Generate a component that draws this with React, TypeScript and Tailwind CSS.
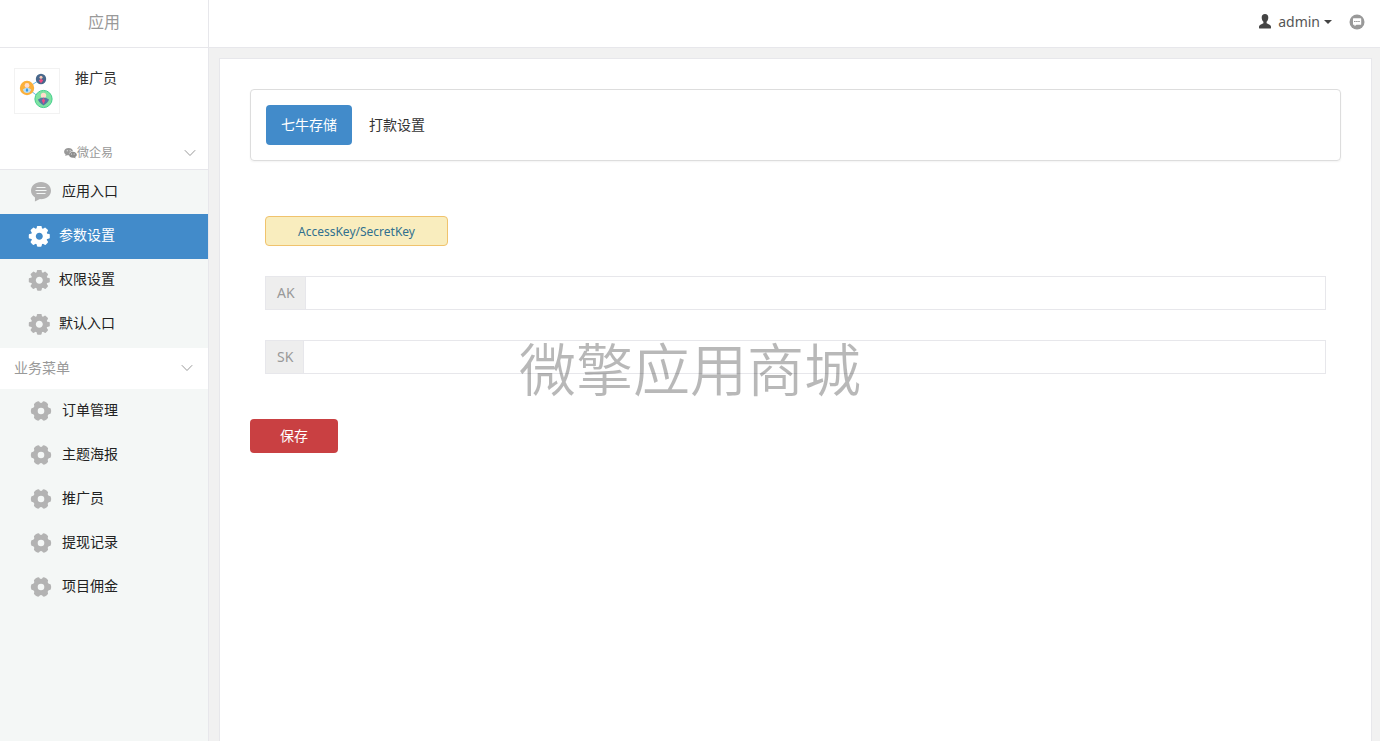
import React from "react";

type IconProps = { className?: string };

function CogIcon({ className = "" }: IconProps) {
  return (
    <svg viewBox="-11.3 -10.3 22 22" className={`size-[22px] shrink-0 ${className}`} aria-hidden="true">
      <circle r="5.9" fill="none" stroke="currentColor" strokeWidth="4.8" />
      {[0, 45, 90, 135, 180, 225, 270, 315].map((angle) => (
        <path
          key={angle}
          d="M-2.9 -7 L-2.3 -9.8 Q-2.1 -10.5 -1.4 -10.5 H1.4 Q2.1 -10.5 2.3 -9.8 L2.9 -7 Z"
          fill="currentColor"
          transform={`rotate(${angle})`}
        />
      ))}
    </svg>
  );
}

function FlowerIcon({ className = "" }: IconProps) {
  return (
    <svg viewBox="-11 -11 22 22" className={`size-[22px] shrink-0 ${className}`} aria-hidden="true">
      <circle r="5.8" fill="none" stroke="currentColor" strokeWidth="5" />
      {[0, 60, 120, 180, 240, 300].map((angle) => (
        <rect
          key={angle}
          x="4.5"
          y="-3.3"
          width="5.6"
          height="6.6"
          rx="2.4"
          fill="currentColor"
          transform={`rotate(${angle})`}
        />
      ))}
    </svg>
  );
}

function ChatIcon({ className = "" }: IconProps) {
  return (
    <svg viewBox="0 0 22 22" className={`size-[22px] shrink-0 ${className}`} aria-hidden="true">
      <path
        d="M11 1C5.300 1 1 4.700 1 9.700c0 2.800 1.500 5.100 4 6.700L4.900 20.400l5-2.300C16.300 18.500 21 14.800 21 9.700 21 4.700 16.700 1 11 1z"
        fill="currentColor"
      />
      <path d="M6.500 6.500h9M5.500 9.500h11M6.500 12.500h9" stroke="#f4f7f6" strokeWidth="1.200" />
    </svg>
  );
}

function ChevronIcon() {
  return (
    <svg viewBox="0 0 12 8" className="h-2 w-3 shrink-0" fill="none" stroke="#999" aria-hidden="true">
      <path d="M.8 1.200 6 6.500l5.200-5.300" />
    </svg>
  );
}

function WechatIcon() {
  return (
    <svg viewBox="0 0 14 12" className="h-3 w-[13px] shrink-0" aria-hidden="true">
      <path d="M5 .6C2.200.6.1 2.300.1 4.600c0 1.200.6 2.300 1.700 3l-.5 1.700 2-1c.7.2 1.300.2 2 .2C5.300 5.600 7 4 9.700 4 9.200 1.900 7.400.6 5 .6z" fill="#999" />
      <path d="M9.600 4.600c-2.400 0-4.200 1.500-4.200 3.300s1.800 3.300 4.200 3.300c.5 0 .9-.1 1.300-.2l1.600.8-.4-1.400c1-.6 1.700-1.500 1.700-2.500 0-1.800-1.800-3.300-4.200-3.300z" fill="#8d8d8d" />
      <g fill="#fff">
        <circle cx="3.500" cy="3.600" r=".6" />
        <circle cx="6.600" cy="3.600" r=".6" />
        <circle cx="8.200" cy="7" r=".55" />
        <circle cx="10.900" cy="7" r=".55" />
      </g>
    </svg>
  );
}

function AppLogo() {
  return (
    <svg viewBox="0 0 44 44" className="size-11" aria-hidden="true">
      <path d="M12 19 26 10M12 19l16 12" stroke="#68b9e8" strokeWidth="1" />
      <circle cx="26" cy="10" r="5.200" fill="#48688c" />
      <circle cx="26" cy="8.300" r="1.500" fill="#f8c9b8" />
      <path d="M23.800 11.500q2.200-3 4.400 0L26 14.200z" fill="#f04b83" />
      <circle cx="12" cy="19" r="7.200" fill="#fbb03b" />
      <circle cx="12" cy="16.500" r="2.400" fill="#ffdccb" />
      <path d="M7.800 20.500q4.200-3.500 8.400 0-1 3.500-4.200 3.500t-4.200-3.500z" fill="#b9def5" />
      <path d="m12 18.800 1.300 2.400-1.300 2-1.300-2z" fill="#3397ea" />
      <circle cx="28.500" cy="30" r="8.600" fill="#7fe3a2" stroke="#45cf8d" strokeWidth="1" />
      <circle cx="28.500" cy="26.500" r="2.700" fill="#ffdccb" />
      <path d="M23 30.500q5.500-4 11 0-.8 3-5.500 6-4.700-3-5.500-6z" fill="#5577a2" />
      <path d="m28.500 29 1.700 2.500-1.700 3.500-1.700-3.500z" fill="#f04b83" />
    </svg>
  );
}

function UserIcon() {
  return (
    <svg viewBox="0 0 14 15" className="h-[15px] w-3.5 shrink-0" fill="#444" aria-hidden="true">
      <path d="M7 0C4.800 0 3.700 1.500 3.700 3.500c0 1.900.7 3.300 1.700 4.300v1.500L2.400 10.800C1.400 11.300 1 12 1 13v.7c0 .6.300.9.900.9h10.200c.6 0 .9-.3.900-.9V13c0-1-.4-1.700-1.400-2.200L8.600 9.300V7.800c1-1 1.700-2.400 1.700-4.300C10.300 1.500 9.200 0 7 0z" />
    </svg>
  );
}

function MessageIcon() {
  return (
    <svg viewBox="0 0 16 16" className="size-4" aria-hidden="true">
      <circle cx="8" cy="8" r="7.500" fill="#999" />
      <path d="M4.500 4.300h7.200q.5 0 .5.500v5.400q0 .5-.5.500H7.500L5.500 12.300v-1.600h-1q-.5 0-.5-.5V4.800q0-.5.500-.5z" fill="#fff" />
      <path d="M5 7.500h6" stroke="#999" strokeDasharray="1.600 .5" />
    </svg>
  );
}

type Item = { label: string; icon: React.ReactNode; compact?: boolean; active?: boolean };

const systemItems: Item[] = [
  { label: "应用入口", icon: <ChatIcon /> },
  { label: "参数设置", icon: <CogIcon />, compact: true, active: true },
  { label: "权限设置", icon: <CogIcon />, compact: true },
  { label: "默认入口", icon: <CogIcon />, compact: true },
];

const businessItems: Item[] = ["订单管理", "主题海报", "推广员", "提现记录", "项目佣金"].map((label) => ({
  label,
  icon: <FlowerIcon />,
}));

function Menu({ items }: { items: Item[] }) {
  return (
    <ul>
      {items.map(({ label, icon, compact, active }) => (
        <li key={label}>
          <a
            href="#"
            aria-current={active ? "page" : undefined}
            className={`flex items-center ${active ? "h-[45px] bg-[#428bca] text-white" : "h-11 text-[#222]"} ${
              compact ? "gap-[9px] pl-7" : "gap-2.5 pl-[30px]"
            }`}
          >
            <span className={active ? "text-white" : "text-[#b3b3b3]"}>{icon}</span>
            <span className={compact ? "pb-1" : "pb-0.5"}>{label}</span>
          </a>
        </li>
      ))}
    </ul>
  );
}

function KeyField({ id, label }: { id: string; label: string }) {
  return (
    <div className="flex h-[34px] border border-[#e7e7eb]">
      <label htmlFor={id} className="flex items-center border-r border-[#e7e7eb] bg-[#eee] pl-[11px] pr-2.5 text-[#999]">
        {label}
      </label>
      <input id={id} type="text" className="min-w-0 flex-1 bg-transparent px-3 text-[#555] outline-none" />
    </div>
  );
}

export default function App() {
  return (
    <div className="relative flex min-h-screen bg-[#f1f1f1] font-['Noto_Sans','Noto_Sans_CJK_SC',sans-serif] text-sm leading-5 text-[#333]">
      <aside className="flex w-[209px] shrink-0 flex-col border-r border-[#e7e7eb] bg-[#f4f7f6]">
        <div className="flex h-12 items-center justify-center border-b border-[#e7e7eb] bg-white pb-1 text-base text-[#999]">
          应用
        </div>
        <div className="flex h-[87px] gap-[15px] bg-white pl-3.5 pt-5">
          <div className="size-[46px] border border-[#f2f2f2]">
            <AppLogo />
          </div>
          <h1>推广员</h1>
        </div>
        <button
          type="button"
          className="flex h-[35px] items-center border-b border-[#e7e7eb] bg-white pl-16 pr-3 pt-px text-xs text-[#999]"
        >
          <WechatIcon />
          <span className="flex-1 text-left">微企易</span>
          <ChevronIcon />
        </button>
        <Menu items={systemItems} />
        <button
          type="button"
          className="mt-px flex h-[41px] items-center justify-between bg-white pb-px pl-3.5 pr-[15px] text-[#999]"
        >
          业务菜单
          <ChevronIcon />
        </button>
        <Menu items={businessItems} />
      </aside>

      <div className="flex min-w-0 flex-1 flex-col">
        <header className="flex h-12 items-center justify-end gap-[17px] border-b border-[#e7e7eb] bg-white pb-1 pr-[15px]">
          <button type="button" className="flex items-center gap-1.5 text-[#555]">
            <UserIcon />
            <span className="flex items-center gap-1">
              admin
              <svg viewBox="0 0 8 4" className="h-1 w-2" fill="#444" aria-hidden="true">
                <path d="M0 0h8L4 4z" />
              </svg>
            </span>
          </button>
          <button type="button" aria-label="消息">
            <MessageIcon />
          </button>
        </header>

        <main className="ml-2.5 mr-2 mt-2.5 flex-1 border border-b-0 border-[#e7e7eb] bg-white p-[30px]">
          <nav className="flex gap-0.5 rounded border border-[#ddd] p-[15px] shadow-xs">
            <a href="#" aria-current="page" className="rounded bg-[#428bca] px-[15px] py-2.5 text-white">
              七牛存储
            </a>
            <a href="#" className="rounded px-[15px] py-2.5">
              打款设置
            </a>
          </nav>

          <form className="pt-[55px]">
            <div className="flex flex-col gap-[30px] px-[15px]">
              <a
                href="#"
                className="flex h-[30px] w-[183px] items-center justify-center rounded border border-[#f0c36d] bg-[#f9edbe] pt-0.5 text-xs text-[#31708f]"
              >
                AccessKey/SecretKey
              </a>
              <KeyField id="access-key" label="AK" />
              <KeyField id="secret-key" label="SK" />
            </div>
            <button
              type="button"
              className="mt-[45px] h-[34px] rounded bg-[#c94042] px-[30px] text-white"
            >
              保存
            </button>
          </form>
        </main>
      </div>

      <div className="pointer-events-none absolute inset-x-0 top-[334px] text-center text-[57px] font-[350] leading-[70px] text-black/28">
        微擎应用商城
      </div>
    </div>
  );
}
